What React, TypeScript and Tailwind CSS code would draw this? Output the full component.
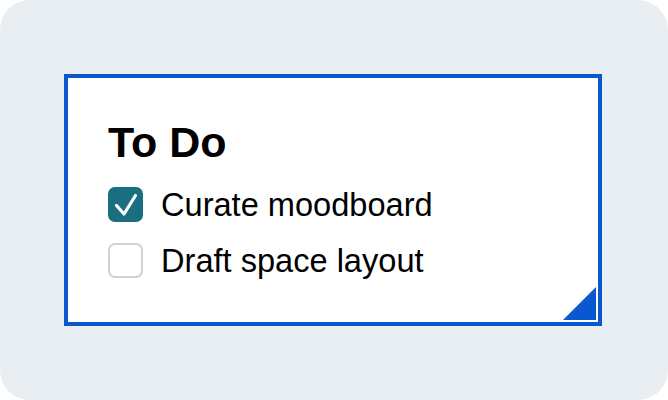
const items = [
  { label: 'Curate moodboard', done: true },
  { label: 'Draft space layout', done: false },
]

const Check = () => (
  <svg viewBox="0 0 35 35" className="h-[35px] w-[35px]" fill="none">
    <path d="M8.5 18.5l7.5 8.5L27.5 8.5" stroke="white" strokeWidth="3.2" strokeLinecap="round" strokeLinejoin="round" />
  </svg>
)

const App = () => {
  return (
    <div className="h-[400px] w-[668px] bg-white font-['Liberation_Sans',Arial,sans-serif]">
      <div className="flex h-full w-full items-center justify-center rounded-[30px] bg-[#e9eef3] pr-[2px]">
        <div className="relative h-[252px] w-[538px] border-4 border-[#0b57d0] bg-white pl-10 pt-[44px]">
          <h2 className="text-[43px] font-bold leading-[40px] text-black">To Do</h2>
          <ul className="mt-[25px] flex flex-col gap-[21px]">
            {items.map((item) => (
              <li key={item.label} className="flex items-center gap-[18px]">
                {item.done ? (
                  <span className="flex h-[35px] w-[35px] items-center justify-center rounded-[7px] bg-[#196f80]">
                    <Check />
                  </span>
                ) : (
                  <span className="h-[35px] w-[35px] rounded-[7px] border-2 border-[#d2d2d2] bg-white" />
                )}
                <span className="text-[32.6px] leading-[35px] text-black">{item.label}</span>
              </li>
            ))}
          </ul>
          <svg className="absolute bottom-[2px] right-[2px] h-[33px] w-[33px]" viewBox="0 0 33 33">
            <polygon points="33,0 33,33 0,33" fill="#0b57d0" />
          </svg>
        </div>
      </div>
    </div>
  )
}

export default App
